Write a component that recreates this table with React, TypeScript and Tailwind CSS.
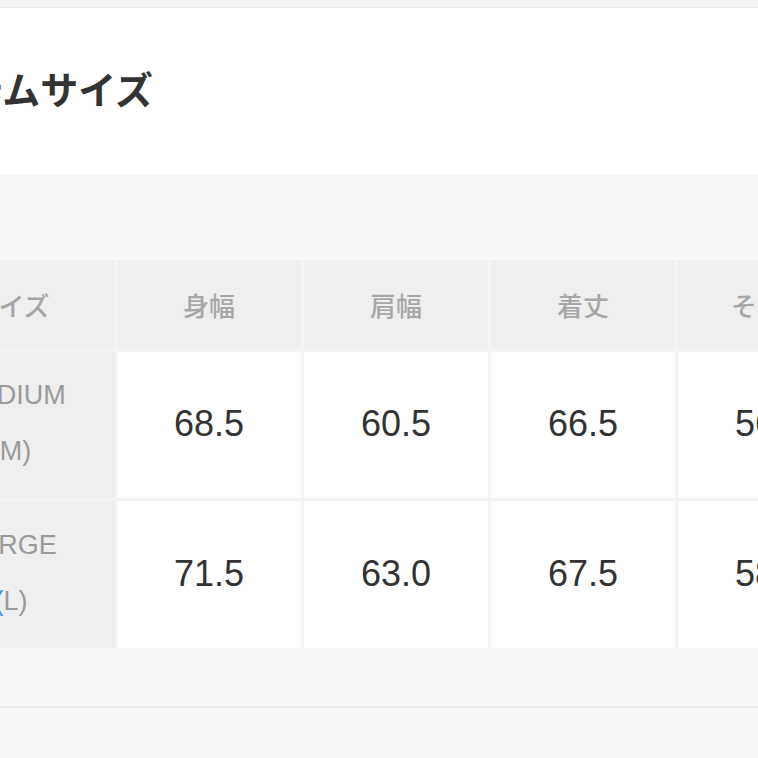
const jp = "font-['Noto_Sans_CJK_JP','Noto_Sans',sans-serif]";
const num = "font-['Liberation_Sans','Noto_Sans_CJK_JP',sans-serif]";

const headers = ["身幅", "肩幅", "着丈", "そで丈"];

const rows = [
  { name: "MEDIUM", open: "(", short: "M", values: ["68.5", "60.5", "66.5", "56.0"], openBlue: false },
  { name: "LARGE", open: "(", short: "L", values: ["71.5", "63.0", "67.5", "58.0"], openBlue: true },
];

export default function App() {
  return (
    <div className="w-[758px] h-[758px] overflow-hidden bg-[#f7f7f7] flex flex-col">
      {/* top strip */}
      <div className="h-[8px] shrink-0 bg-[#f4f4f4] border-b border-[#e8e8e8]" />

      {/* title */}
      <div className="h-[166px] shrink-0 bg-white flex items-center pb-[6px]">
        <h2 className={`${jp} ml-[-108px] text-[38px] font-bold leading-none text-[#333] whitespace-nowrap`}>
          アイテムサイズ
        </h2>
      </div>

      {/* size table */}
      <div className="pt-[86px] pb-[58px] shrink-0 border-b-2 border-[#ebebeb]">
        <div className="ml-[-92px] w-max grid grid-cols-[206px_184px_184px_184px_184px] grid-rows-[89px_146px_147px] gap-[3px] bg-[#f4f4f4]">
          <div className={`${jp} bg-[#efefef] flex items-center justify-center text-[26px] font-medium text-[#a6a6a6]`}>
            サイズ
          </div>
          {headers.map((h) => (
            <div
              key={h}
              className={`${jp} bg-[#efefef] flex items-center justify-center text-[26px] font-medium text-[#a6a6a6]`}
            >
              {h}
            </div>
          ))}

          {rows.map((row) => (
            <>
              <div
                key={row.name}
                className={`${num} bg-[#efefef] flex flex-col items-center justify-center pb-[4px] text-[27px] leading-[56px] text-[#9a9a9a]`}
              >
                <span>{row.name}</span>
                <span>
                  <span className={row.openBlue ? "text-[#3d8fe0]" : ""}>{row.open}</span>
                  {row.short})
                </span>
              </div>
              {row.values.map((v, i) => (
                <div
                  key={row.name + i}
                  className={`${num} bg-white flex items-center justify-center pb-[2px] text-[36px] text-[#333]`}
                >
                  {v}
                </div>
              ))}
            </>
          ))}
        </div>
      </div>

      <div className="flex-1 bg-[#f7f7f7]" />
    </div>
  );
}
